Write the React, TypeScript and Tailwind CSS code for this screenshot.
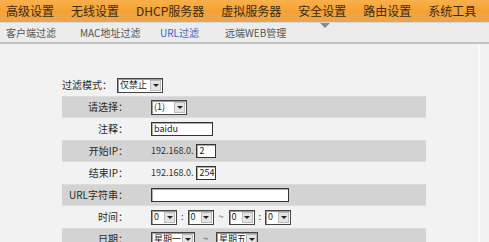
import React from "react";

const menus = ["高级设置", "无线设置", "DHCP服务器", "虚拟服务器", "安全设置", "路由设置", "系统工具"];
const tabs = [
  { name: "客户端过滤", w: "w-[74px]" },
  { name: "MAC地址过滤", w: "w-[80px]" },
  { name: "URL过滤", w: "w-[65px]", active: true },
  { name: "远端WEB管理", w: "w-[70px]" },
];

function Select({ value, w }: { value: string; w: string }) {
  return (
    <div className={`${w} shrink-0 h-[15px] flex items-center border border-[#444] bg-white shadow-[inset_1px_1px_0_#999]`}>
      <span className="flex-1 pl-[2px] text-[9px] leading-[12px] text-[#222] whitespace-nowrap">{value}</span>
      <span className="w-[11px] h-[11px] shrink-0 mr-[1px] flex items-center justify-center bg-[#e4e4e4] border border-[#bbb]">
        <span className="w-0 h-0 border-l-[3px] border-r-[3px] border-t-[3px] border-l-transparent border-r-transparent border-t-[#222]" />
      </span>
    </div>
  );
}

function Input({ value, w }: { value: string; w: string }) {
  return (
    <div className={`${w} shrink-0 h-[14px] flex items-center border border-[#333] bg-white shadow-[inset_1px_1px_0_#aaa] pl-[2px] text-[9px] leading-[12px] text-[#222]`}>
      {value}
    </div>
  );
}

function Row({ label, gray, children }: { label: string; gray?: boolean; children: React.ReactNode }) {
  return (
    <div className={`h-[22px] flex items-center ${gray ? "bg-[#d3d3d3] border-y border-[#dcdcdc]" : ""}`}>
      <span className="w-[66px] shrink-0 text-right text-[10px] leading-[14px] text-[#2a2a2a] whitespace-nowrap">{label}</span>
      <div className="ml-[23px] flex items-center gap-[2px] text-[9px] leading-[12px] text-[#333] whitespace-nowrap">{children}</div>
    </div>
  );
}

export default function App() {
  return (
    <div className="w-[489px] h-[242px] overflow-hidden bg-[#f2f2f2] font-['Noto_Sans_CJK_SC','Noto_Sans',sans-serif]">
      {/* top menu */}
      <div className="h-[22px] flex items-center gap-[17px] pl-[6px] bg-gradient-to-b from-[#f9b04a] via-[#f6a232] to-[#e9a650] text-[12px] text-[#3b2a12] whitespace-nowrap">
        {menus.map((m) => (
          <span key={m} className="shrink-0 leading-[16px]">{m}</span>
        ))}
      </div>
      {/* sub tabs */}
      <div className="relative h-[22px] flex items-center pl-[6px] bg-[#ececec] border-t border-[#d8d8d8] border-b-2 border-b-[#c4c4c4] text-[10px] text-[#555] whitespace-nowrap">
        {tabs.map((t) => (
          <span key={t.name} className={`${t.w} shrink-0 leading-[14px] ${t.active ? "text-[#3a64c8]" : ""}`}>{t.name}</span>
        ))}
        <span className="absolute left-[320px] top-0 w-0 h-0 border-l-[5px] border-r-[5px] border-t-[5px] border-l-transparent border-r-transparent border-t-[#8a8a8a]" />
      </div>
      {/* content */}
      <div className="flex h-[200px]">
        <div className="w-[478px] pt-[30px] pl-[62px]">
          <div className="h-[22px] flex items-center text-[10px] leading-[14px] text-[#2a2a2a] whitespace-nowrap">
            <span className="w-[55px] shrink-0">过滤模式：</span>
            <Select value="仅禁止" w="w-[46px]" />
          </div>
          <div className="w-[364px]">
            <Row label="请选择：" gray>
              <Select value="(1)" w="w-[36px]" />
            </Row>
            <Row label="注释：">
              <Input value="baidu" w="w-[62px]" />
            </Row>
            <Row label="开始IP：" gray>
              <span className="mr-[1px]">192.168.0.</span>
              <Input value="2" w="w-[20px]" />
            </Row>
            <Row label="结束IP：">
              <span className="mr-[1px]">192.168.0.</span>
              <Input value="254" w="w-[20px]" />
            </Row>
            <Row label="URL字符串：" gray>
              <Input value="" w="w-[138px]" />
            </Row>
            <Row label="时间：">
              <Select value="0" w="w-[26px]" />
              <span className="mx-[2px]">:</span>
              <Select value="0" w="w-[26px]" />
              <span className="mx-[3px]">~</span>
              <Select value="0" w="w-[26px]" />
              <span className="mx-[2px]">:</span>
              <Select value="0" w="w-[26px]" />
            </Row>
            <Row label="日期：" gray>
              <Select value="星期一" w="w-[44px]" />
              <span className="mx-[6px]">~</span>
              <Select value="星期五" w="w-[42px]" />
            </Row>
          </div>
        </div>
        <div className="w-[2px] bg-[#fafafa]" />
      </div>
    </div>
  );
}
